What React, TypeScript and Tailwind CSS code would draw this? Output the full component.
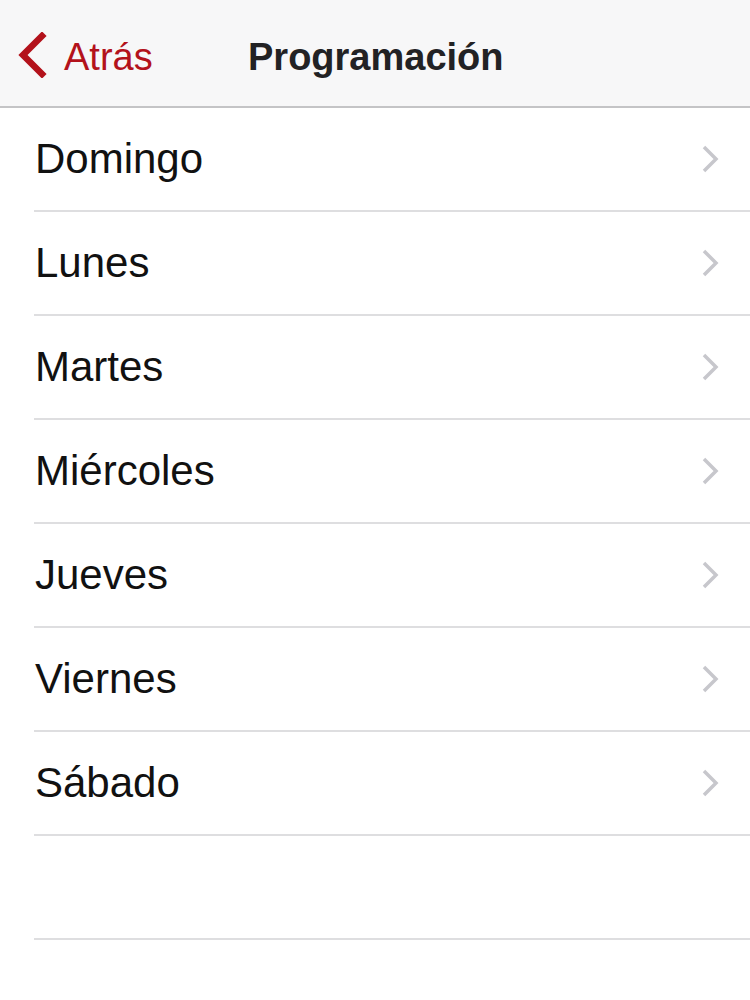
const DAYS = ['Domingo', 'Lunes', 'Martes', 'Miércoles', 'Jueves', 'Viernes', 'Sábado'];

function BackChevron() {
  return (
    <svg width="30" height="46" viewBox="0 0 30 46" className="shrink-0">
      <path d="M25 4 L6 23 L25 42" fill="none" stroke="#b3121b" strokeWidth="6.5" strokeLinecap="square" />
    </svg>
  );
}

function RowChevron() {
  return (
    <svg width="20" height="30" viewBox="0 0 20 30" className="shrink-0">
      <path d="M4 3 L16 15 L4 27" fill="none" stroke="#c7c7cc" strokeWidth="3.5" />
    </svg>
  );
}

export default function App() {
  return (
    <div className="w-[750px] h-[1000px] bg-white overflow-hidden" style={{ fontFamily: '"Liberation Sans", Arial, sans-serif' }}>
      {/* Nav bar */}
      <div className="h-[108px] bg-[#f7f7f8] border-b-2 border-[#c4c4c6] flex items-center pt-[4px]">
        <div className="flex items-center pl-[17px] w-[248px]">
          <BackChevron />
          <span className="ml-[17px] text-[38px] text-[#b3121b] leading-none pt-[3px]">Atrás</span>
        </div>
        <span className="text-[38px] font-bold text-[#222224] leading-none pt-[3px]">Programación</span>
      </div>

      {/* Day list */}
      <div className="pl-[34px]">
        {DAYS.map((d) => (
          <div key={d} className="h-[104px] border-b-2 border-[#dedee0] flex items-center justify-between pr-[30px]">
            <span className="text-[42px] text-[#111] leading-none pl-[1px]">{d}</span>
            <RowChevron />
          </div>
        ))}
        <div className="h-[104px] border-b-2 border-[#dedee0]" />
      </div>
    </div>
  );
}
